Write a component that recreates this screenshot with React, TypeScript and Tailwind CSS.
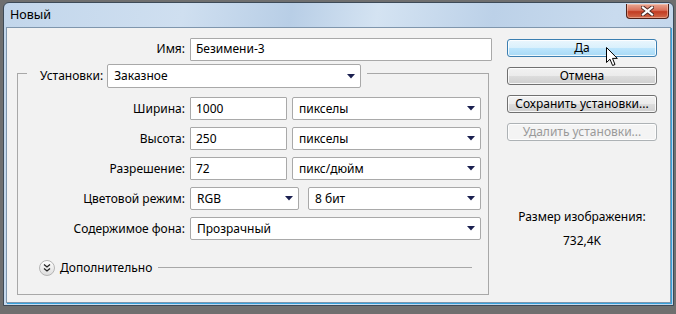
import React from "react";

const FONT = "font-['Noto_Sans','DejaVu_Sans',sans-serif]";

function Arrow() {
  return (
    <svg width="8" height="5" viewBox="0 0 8 5" className="shrink-0">
      <path d="M0 0H8L4 4.5Z" fill="#1b2050" />
    </svg>
  );
}

function Select({ value, className }: { value: string; className: string }) {
  return (
    <div
      className={`flex items-center justify-between h-[23px] bg-white border border-[#a9a9a9] rounded-[2px] pl-[6px] pr-[5px] ${className}`}
    >
      <span>{value}</span>
      <Arrow />
    </div>
  );
}

function Field({ value, className }: { value: string; className: string }) {
  return (
    <div className={`flex items-center h-[23px] bg-white border border-[#a9a9a9] rounded-[1px] pl-[5px] ${className}`}>
      {value}
    </div>
  );
}

function Label({ text }: { text: string }) {
  return <div className="w-[167px] mr-[5px] text-right shrink-0">{text}</div>;
}

function Button({ label, state }: { label: string; state: "normal" | "hover" | "disabled" }) {
  const look =
    state === "hover"
      ? "border-[#3c7fb1] bg-[linear-gradient(to_bottom,#eaf6fd_0%,#d9f0fc_50%,#bee6fd_50%,#a7d9f5_100%)] text-black"
      : state === "disabled"
        ? "border-[#adb2b5] bg-[#f4f4f4] text-[#9a9a9a]"
        : "border-[#707070] bg-[linear-gradient(to_bottom,#f2f2f2_0%,#ebebeb_50%,#dddddd_50%,#cfcfcf_100%)] text-black";
  return (
    <div
      className={`h-[18px] w-full flex items-center justify-center rounded-[3px] border shadow-[inset_0_0_0_1px_rgba(255,255,255,0.8)] leading-none ${look}`}
    >
      {label}
    </div>
  );
}

function Cursor() {
  return (
    <svg width="13" height="20" viewBox="0 0 13 20" className="absolute left-[606px] top-[47px]">
      <path
        d="M0.5 0.5V15.5L4 12.2L6.6 18.5L9 17.5L6.5 11.4H11.3Z"
        fill="white"
        stroke="black"
        strokeWidth="1"
        strokeLinejoin="miter"
      />
    </svg>
  );
}

export default function App() {
  return (
    <div className={`relative w-[676px] h-[314px] bg-[#6f6f6f] pt-[2px] pl-[3px] pr-[2px] pb-[8px] text-[12px] text-black ${FONT}`}>
      <div className="h-full flex flex-col rounded-t-[6px] border border-[#3d4a57] bg-[linear-gradient(100deg,#c2d6eb_0%,#cfdff0_25%,#b8cee6_40%,#d4e3f2_52%,#bcd1e8_68%,#c9dbee_85%,#bfd3ea_100%)]">
        {/* title bar */}
        <div className="h-[24px] flex items-start justify-between pl-[6px] pr-[4px]">
          <div className="pt-[3px] text-[12.5px] text-black">Новый</div>
          <div className="mt-[1px] w-[43px] h-[15px] flex items-center justify-center rounded-b-[4px] border border-t-0 border-[#4f2119] bg-[linear-gradient(to_bottom,#e9a894_0%,#d9705a_45%,#c23c22_55%,#d06a4c_100%)] shadow-[inset_0_0_0_1px_rgba(255,220,200,0.45)]">
            <svg width="13" height="10" viewBox="0 0 13 10">
              <path d="M2 1.5L11 8.5M11 1.5L2 8.5" stroke="#4a2a25" strokeWidth="4" strokeLinecap="square" />
              <path d="M2 1.5L11 8.5M11 1.5L2 8.5" stroke="white" strokeWidth="2.2" strokeLinecap="square" />
            </svg>
          </div>
        </div>

        {/* client area */}
        <div className="flex-1 mx-[2px] mb-[2px] border border-[#7f96ad] bg-[#f2f2f2] shadow-[1px_1px_0_0_#37a3dd] flex pt-[10px] pl-[10px] pr-[12px]">
          {/* left form */}
          <div className="w-[475px] flex flex-col">
            <div className="flex items-center h-[22px]">
              <div className="w-[168px] mr-[5px] text-right">Имя:</div>
              <Field value="Безимени-3" className="w-[302px] h-[22px]" />
            </div>

            {/* group box */}
            <div className="w-[472px] mt-[4px] flex flex-col">
              <div className="flex h-[24px]">
                <div className="w-[10px] mt-[9px] border-t border-l border-[#a8a8a8]" />
                <div className="ml-[13px] mr-[4px] self-center">Установки:</div>
                <Select value="Заказное" className="w-[254px] h-[24px]" />
                <div className="flex-1 ml-[6px] mt-[9px] border-t border-r border-[#a8a8a8]" />
              </div>
              <div className="border-l border-r border-b border-[#a8a8a8] pt-[9px] pb-[17px] flex flex-col gap-[7px]">
                <div className="flex items-center">
                  <Label text="Ширина:" />
                  <Field value="1000" className="w-[97px]" />
                  <Select value="пикселы" className="w-[189px] ml-[5px]" />
                </div>
                <div className="flex items-center">
                  <Label text="Высота:" />
                  <Field value="250" className="w-[97px]" />
                  <Select value="пикселы" className="w-[189px] ml-[5px]" />
                </div>
                <div className="flex items-center">
                  <Label text="Разрешение:" />
                  <Field value="72" className="w-[97px]" />
                  <Select value="пикс/дюйм" className="w-[189px] ml-[5px]" />
                </div>
                <div className="flex items-center">
                  <Label text="Цветовой режим:" />
                  <Select value="RGB" className="w-[109px]" />
                  <Select value="8 бит" className="w-[173px] ml-[9px]" />
                </div>
                <div className="flex items-center">
                  <Label text="Содержимое фона:" />
                  <Select value="Прозрачный" className="w-[291px]" />
                </div>
                <div className="flex items-center mt-[12px] pl-[21px] pr-[16px]">
                  <svg width="16" height="16" viewBox="0 0 16 16" className="shrink-0">
                    <defs>
                      <linearGradient id="cg" x1="0" y1="0" x2="0" y2="1">
                        <stop offset="0" stopColor="#ffffff" />
                        <stop offset="1" stopColor="#dcdcdc" />
                      </linearGradient>
                    </defs>
                    <circle cx="8" cy="8" r="7.5" fill="url(#cg)" stroke="#b4b4b4" />
                    <path d="M5 4.5L8 7L11 4.5M5 8.5L8 11L11 8.5" fill="none" stroke="#222" strokeWidth="1.3" />
                  </svg>
                  <span className="ml-[5px]">Дополнительно</span>
                  <div className="flex-1 h-px bg-[#a8a8a8] ml-[6px] -mt-[2px]" />
                </div>
              </div>
            </div>
          </div>

          {/* right buttons */}
          <div className="ml-[15px] w-[150px] flex flex-col items-center pt-[1px]">
            <div className="w-full flex flex-col gap-[10px]">
              <Button label="Да" state="hover" />
              <Button label="Отмена" state="normal" />
              <Button label="Сохранить установки..." state="normal" />
              <Button label="Удалить установки..." state="disabled" />
            </div>
            <div className="mt-[68px] leading-[16px]">Размер изображения:</div>
            <div className="mt-[8px] leading-[16px]">732,4K</div>
          </div>
        </div>
      </div>
      <Cursor />
    </div>
  );
}
